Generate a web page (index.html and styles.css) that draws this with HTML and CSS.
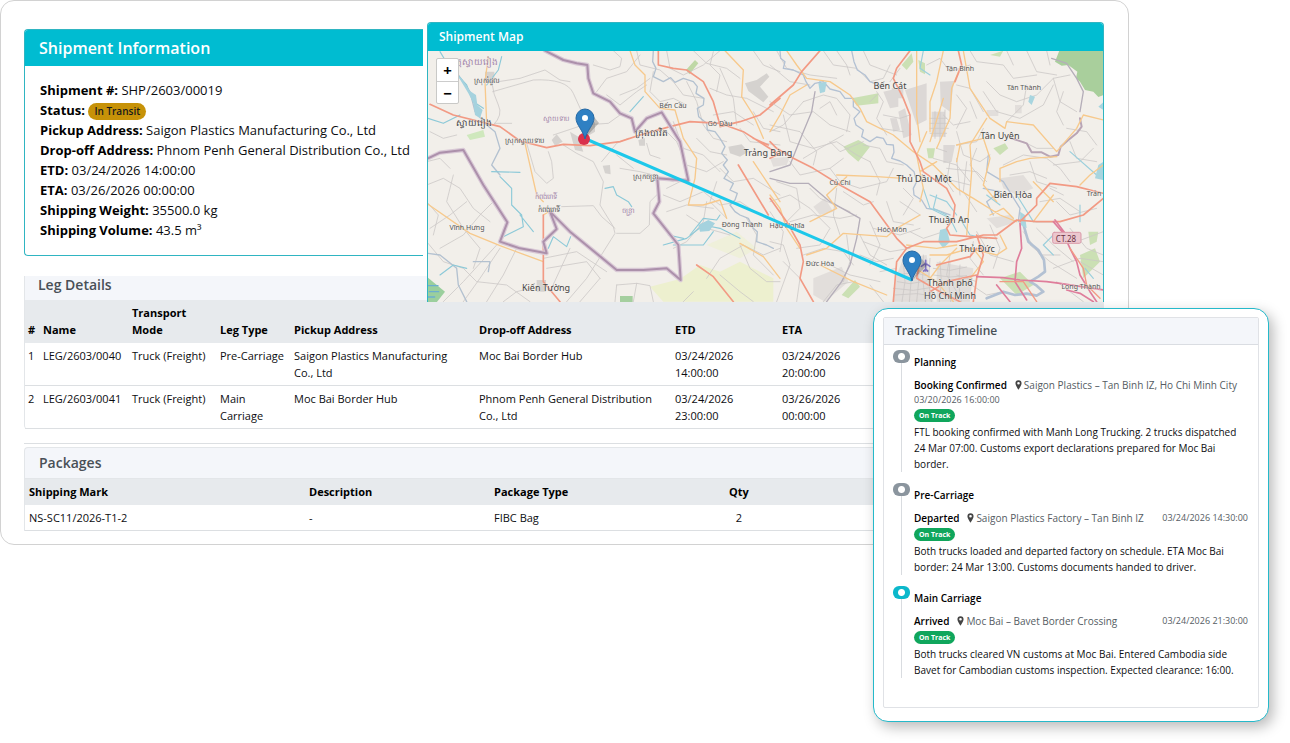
FILE: index.html
```html
<!DOCTYPE html>
<html lang="en">
<head>
<meta charset="utf-8">
<title>Shipment SHP/2603/00019</title>
<link rel="stylesheet" href="styles.css">
</head>
<body>
<main class="page">
  <section class="sheet">
    <div class="overview">
      <div class="overview-side">
        <article class="info">
          <h1 class="info-title">Shipment Information</h1>
          <div class="info-body">
            <p><b>Shipment #:</b> SHP/2603/00019</p>
            <p><b>Status:</b> <span class="status">In Transit</span></p>
            <p><b>Pickup Address:</b> Saigon Plastics Manufacturing Co., Ltd</p>
            <p><b>Drop-off Address:</b> Phnom Penh General Distribution Co., Ltd</p>
            <p><b>ETD:</b> 03/24/2026 14:00:00</p>
            <p><b>ETA:</b> 03/26/2026 00:00:00</p>
            <p><b>Shipping Weight:</b> 35500.0 kg</p>
            <p><b>Shipping Volume:</b> 43.5 m³</p>
          </div>
        </article>
        <h2 class="section-title leg-title">Leg Details</h2>
      </div>
      <article class="map-card">
        <h2 class="map-title">Shipment Map</h2>
        <div class="map">
          <svg class="map-svg" viewBox="0 0 675 251" preserveAspectRatio="xMidYMid slice" role="img" aria-label="Route map">
            <rect width="675" height="251" fill="#f2efea"/>
            <!-- western half -->
            <g transform="translate(-8 -36) scale(.33333)" fill="none" stroke-linejoin="round" stroke-linecap="round">
              <g fill="#edf0cf">
                <path d="M780 792 840 750 900 770 960 740 1060 790 1060 860 730 860 690 815Z"/>
                <path d="M860 690 950 650 1010 700 960 730Z" opacity=".6"/>
              </g>
              <path d="M20 785 75 830 50 862 20 862Z" fill="#9bcf9d"/>
              <path d="M24 812h30M28 830h28M24 846h20" stroke="#6caed0" stroke-width="4"/>
              <path d="M600 843h38v20h-38z" fill="#a5cf9f"/>
              <path d="M798 165 825 135 835 145 808 178Z" fill="#bfd8a6"/>
              <path d="M140 360 190 345 195 365 150 375Z" fill="#cfe8bd"/>
              <g fill="#d5d2cf">
                <path d="M975 205 1010 195 1040 175 1048 185 1020 215 1045 245 1030 262 985 228Z"/>
                <path d="M395 375 410 358 428 380 405 392Z"/><path d="M450 350 475 365 490 410 465 405Z"/>
                <path d="M500 325 525 322 525 350 505 362Z"/><path d="M548 452 570 450 572 478 555 475Z"/>
                <path d="M655 375 675 370 675 392 658 392Z"/><path d="M925 395 965 388 985 410 960 425 930 415Z"/>
                <path d="M195 170h28v32h-28zM350 795h28v35h-28z"/>
              </g>
              <g stroke="#cbc8c6" stroke-width="2.4">
                <path d="M215 200Q220 240 235 270T220 330M218 230 340 195Q440 190 460 235L485 290M235 200 300 190 375 165 420 195 450 200M225 325 275 325"/>
                <path d="M320 385 345 470 380 505 400 490 395 440 385 410M400 360 490 330 565 325 600 300M430 390 470 415 520 440 550 500 540 570 580 635 585 655 500 790 440 860M425 575 520 572 545 605 585 640"/>
                <path d="M590 655 660 655 688 630 690 560 710 540M545 440 570 410 590 385 625 370M600 460 660 470 700 480 760 500M590 420 640 460M680 385 690 420 720 430"/>
                <path d="M20 510 70 490 120 520 160 580 210 620M30 640 90 600 140 560M60 700 130 660 180 600 220 560M100 480 80 560 130 640 180 700 160 760M20 680 70 740 130 760 170 800 260 810 330 860M70 860 130 800 230 690M240 700 180 790 130 860M290 700 250 780 200 860M20 560 55 600 40 660"/>
                <path d="M370 730 470 710 560 770M380 760 500 740 540 790M450 700 390 830M540 790 480 860M590 810 585 860M590 810 650 805 690 812 700 860M640 860 650 805"/>
                <path d="M520 150 570 165 600 155 605 130 580 107M650 107 660 150 720 165 760 200 790 240 850 250M740 107 750 160 790 180 850 150 900 107M820 107 860 145 920 160 960 190M900 160 940 250 950 330M600 240 650 220 690 190M700 170 690 230 720 260 760 250 800 270M870 220 920 240 980 250 1060 290M1000 107 1030 150 1080 170M880 110 870 150 900 180 890 230"/>
                <path d="M800 200 830 260 850 330 880 370 920 380M760 320 790 400 850 420 900 470M740 350 770 380 800 450 860 470 910 440M830 370 870 410 920 420M960 340 990 380 1080 390M1000 290 1030 340 1080 350M880 300 940 290 1000 330"/>
                <path d="M730 540 780 560 850 530 900 570 960 560 1020 600M740 520 800 490M740 590 800 570 880 580M800 600 860 640 930 660M860 560 850 620 800 680 760 700M890 500 870 560 920 610M900 460 940 500 1000 490 1080 540M860 790 900 730 970 690 1030 720 1080 700M820 830 790 860M900 780 960 830 1000 860M960 690 990 760 1040 800 1080 800M980 610 1010 660 1000 720 1060 780"/>
                <path d="M560 240 600 270 650 230 680 210M530 230 560 190 620 170 660 120M250 860 290 830 330 820M20 440 60 430 90 460M30 350 70 370 110 360"/>
              </g>
              <g stroke="#b3c1d0" stroke-width="4">
                <path d="M115 180 150 230 165 290 200 330 225 350 240 400 215 450 240 480"/>
                <path d="M700 107 698 140 708 160 700 185 730 200 752 188 765 202 790 190 820 200 832 215 828 235 852 250 850 270 832 280 836 305 860 325 862 345 885 350 900 370 915 395 905 415 922 435 910 450 925 470 912 490 940 505 930 525 952 535 945 555 930 570 945 590 960 600 985 610 1000 640 1012 650 1010 680 1040 690 1060 700"/>
                <path d="M24 715 60 720 110 760 115 810 140 860M160 740 210 740 205 770"/>
              </g>
              <g stroke="#8cc9d8" stroke-width="3.4">
                <path d="M85 150 140 210 160 260 190 280M245 125 235 165 200 210M60 110 90 160M24 310 70 325 120 300M215 470 300 472M240 485 275 520 275 570 305 600 310 635 250 665M300 600 340 650M385 700 400 665 440 695 452 665M555 520 580 515 590 540 625 560 635 575M730 690 800 670 850 630 900 640 960 670M630 290 670 245M745 660 790 670M60 780 100 750 140 760"/>
                <path d="M810 660 850 610 890 615 900 600M760 690 850 690 880 650"/>
              </g>
              <path d="M112 180 145 235 160 265 165 300 180 310 188 285 172 270 168 240 150 228 125 190ZM835 630 865 615 885 625 868 648 840 650Z" fill="#a5d2de"/>
              <g stroke="#f7c98c" stroke-width="4">
                <path d="M205 125 195 200 200 325M315 385 350 540 370 560M20 565 150 655 240 692 370 740M630 107 645 150 675 180 675 230 720 280 765 285 790 370 830 430 825 490 805 570 850 570 900 555 920 610M915 107 970 165 965 245 1000 300 1030 370M960 685 1030 725 1080 790M1000 440 1040 500 1080 560M370 600 395 585"/>
              </g>
              <g stroke="#f29a84" stroke-width="5">
                <path d="M30 268 100 300 240 335 300 378 380 398 430 388 510 392 600 380 660 360 750 335 810 320 900 325 970 350 1080 420M715 107 715 150 760 160 800 165 850 200 880 260 900 330M955 450 1045 600M830 750 880 785 940 860M370 600 370 800 420 860M1080 250 1020 300 960 320 900 335M1000 370 1045 390"/>
              </g>
              <g stroke="#d9c9d6" stroke-width="13">
                <path d="M24 430 60 413 130 405 190 510 262 622 240 680 300 700 380 715 370 680 410 642 390 590 450 650 590 765 670 765 740 760 782 795 775 690 700 595 718 560 712 490 805 497 780 380 725 292 680 310 645 350 635 310 600 295 570 260 520 235 505 190 502 150 470 145 430 135 375 107"/>
              </g>
              <g stroke="#ac90ab" stroke-width="6">
                <path d="M24 430 60 413 130 405 190 510 262 622 240 680 300 700 380 715 370 680 410 642 390 590 450 650 590 765 670 765 740 760 782 795 775 690 700 595 718 560 712 490 805 497 780 380 725 292 680 310 645 350 635 310 600 295 570 260 520 235 505 190 502 150 470 145 430 135 375 107"/>
              </g>
            </g>
            <!-- eastern half -->
            <g transform="translate(342 -36) scale(.33333)" fill="none" stroke-linejoin="round" stroke-linecap="round">
              <path d="M868 107 1000 107 1000 240 985 246 970 230 945 225 930 200 918 190 922 170 895 150 875 152 855 140Z" fill="#a9cf9c"/>
              <g fill="#cbe0b4">
                <path d="M245 250 325 235 325 265 260 272ZM220 395 265 375 300 395 265 440 235 415ZM395 150 425 115 430 140 410 165ZM445 135 465 145 465 178 450 170ZM215 840 255 795 270 815 235 850ZM470 400 495 400 490 430 475 430ZM660 120 700 107 690 125Z"/>
                <path d="M930 720 975 700 990 740 940 790ZM955 650 985 650 980 680 960 690ZM670 400 705 385 715 400 690 420ZM690 790 750 770 790 810 740 840Z"/>
              </g>
              <g fill="#dcd8d6">
                <path d="M340 230 385 220 385 275 360 280ZM385 290 405 280 425 360 400 370ZM405 225 470 205 470 315 440 330ZM510 200 552 198 540 290 512 270ZM485 290 525 290 525 365 485 365ZM520 390 555 390 545 440 520 445ZM360 310 380 310 390 345 370 350ZM365 220h35v30h-35z"/>
                <path d="M0 430 60 425 50 450 10 455ZM130 575 165 550 190 590 150 600ZM130 790 215 755 235 800 165 860 130 840ZM650 285h35v18h-35zM735 270h20v25h-20zM690 490 760 480 790 520 740 540 700 520ZM400 730 470 720 490 860 370 860 380 780ZM500 740 610 760 600 860 500 860ZM650 610 720 600 740 620 680 640Z" opacity=".75"/>
              </g>
              <g stroke="#cbc8c7" stroke-width="2.4">
                <path d="M0 150 60 200 120 210M20 107 50 160 120 180 200 190M100 260 160 240 200 250 240 300 230 350M0 260 60 300 130 290 180 330 240 350M40 300 60 380 130 400 200 380 260 420 300 440M160 107 190 150 260 160 300 200 340 190 360 150M200 107 230 150 240 180M280 107 300 150 380 180M0 330 90 350 140 410 130 450M100 430 150 400 220 360M60 440 90 480 180 460 220 430M180 460 210 500 270 520 350 500 370 460M0 350 40 330 100 260"/>
                <path d="M0 560 60 540 120 580 180 640 150 690 80 700M0 590 40 650 30 710M60 620 130 600 210 610 260 600M120 520 150 550 240 590M200 520 190 600 210 660M220 530 280 570 310 560M300 440 330 500 320 540M280 390 330 400 350 440 400 450M20 500 80 520 90 580 50 620M0 680 40 690 60 750 20 860M40 740 90 790 80 860M100 720 160 700 220 710 250 750M180 750 240 780 330 800M160 860 200 810 250 800M230 660 240 740 220 800M270 660 300 720 350 750M150 280 180 260 200 300M180 380 210 410 280 380"/>
                <path d="M320 230 340 260 320 310 350 360M300 260 320 240M360 200 390 160M340 300 390 310 420 300M330 340 400 350M470 150 510 130 540 170 600 150M600 107 620 140 700 150 730 190 800 180M650 200 690 240 740 260 800 240 850 190 900 180M640 230 680 290 750 310 820 270 850 210M710 107 730 150M770 107 800 170 860 180M830 107 840 150M850 190 870 260 920 290M710 320 760 270 770 210M560 210 600 220 640 290M560 240 590 280 560 340M520 300 550 330 600 320M600 260 620 310M880 230 860 290 880 330M640 340 620 380 560 390"/>
                <path d="M480 310h50M480 325h55M480 340h55M480 355h50M495 290v80M510 285v90M525 285v80M500 400 530 410M490 430 560 450 600 500M560 350 580 420 630 440 660 420M530 460 620 470 650 500M520 490 600 510M510 470 550 530M540 440 530 500M560 430 570 540M620 400 600 450 640 500M590 440 580 530 620 590M700 450 760 420 830 430 870 460 900 500M780 440 800 500 860 520M760 380 800 400 850 400M900 380 920 430 980 440M720 480 780 470 830 490M860 560 900 600 980 580M810 560 870 550 930 590M840 520 880 540M850 450 930 440 970 400M890 340 950 350 980 390"/>
                <path d="M300 620 330 690 300 750M310 640 390 660 450 640M280 680 360 710 420 700M350 560 370 620 430 630M390 560 450 600M400 520 430 550 400 600M270 720 320 740 370 730M330 770 380 760M300 810 340 860M420 650 460 670 520 650M610 680 600 730 640 780M620 650 660 720 730 740M660 630 690 700 670 760M590 800 650 840 700 830M540 720 530 780 560 830M560 780 620 800M800 640 850 690 910 740M780 690 840 740 920 790M900 640 950 700 1000 720M930 740 1000 780M850 760 930 730 1000 740M860 800 940 860M920 680 1000 650M760 650 810 720 870 720"/>
                <path d="M380 780 430 772 470 782M382 800 420 806 480 796M370 820 430 826 480 818M375 840 440 836 485 842M400 740 405 800 396 860M420 720 424 790 418 860M440 730 446 800 440 860M460 720 458 790 466 860M480 730 476 800 484 860M490 760 540 766 590 756M490 780 540 786 590 782M510 740 514 800 508 860M540 740 536 800 542 860M570 750 566 810 574 860"/>
              </g>
              <g stroke="#b5aeb9" stroke-width="4">
                <path d="M135 230 125 290 100 350 80 400 60 450 0 470M0 490 60 505 115 505 180 560 270 610 260 670 240 750 215 800 170 860M845 130 890 145 920 190 940 230 930 290"/>
              </g>
              <g stroke="#b3c1d3" stroke-width="4">
                <path d="M30 107 32 130 45 140 40 160 70 165 100 180 108 200 120 220 135 205 160 200 180 222 210 230 225 250 250 250 250 275 270 290 252 310 258 330 280 345 275 365 300 380 320 366 340 370 350 388 370 390 372 412 365 430 390 438 410 450 432 470 440 500 430 520 432 540 455 555 470 580 500 585 540 600M245 107 252 140 262 165 285 180 300 200 340 215M655 420 650 470 700 500 750 580 745 620M670 600 650 560 690 530 640 520"/>
                <path d="M755 610 765 645 775 680 805 705 822 735 825 770 805 785 780 800 800 812 820 830 800 842 770 836 735 840 700 830 650 850" stroke-width="8"/>
              </g>
              <g stroke="#9bcfdc" stroke-width="3.5">
                <path d="M460 520 480 580 540 610 560 650M480 540 530 560 560 600M740 540 790 620 850 620M850 660 820 690 850 720M945 760 970 790M460 107 450 160 480 180M500 540 490 580 530 600M570 610 600 660 650 670M930 570 930 620M900 410 980 480M650 540 690 570M150 200 160 230"/>
              </g>
              <path d="M510 645 530 640 540 680 520 700 505 680ZM780 240 795 245 785 270 775 260ZM985 450 1000 440 1000 495 975 490ZM145 205 170 200 165 230 150 235ZM750 590 765 600 770 640 752 630ZM985 275 1000 262 1000 285Z" fill="#a8d5df"/>
              <path d="M725 370 770 385 785 412 815 412 840 425 865 420 872 395 895 375 920 355 935 335 930 310" stroke="#b9a5b5" stroke-width="6"/>
              <g stroke="#f7c98c" stroke-width="4">
                <path d="M50 107 80 150 110 190 180 200 240 240 270 280 290 320 370 360 430 410 490 450 560 520 610 550 690 600 740 620M440 107 440 300 450 380M500 440 450 470 460 520 450 560M480 350 480 260 500 200 520 107M580 107 600 220 660 310 705 340M500 400 540 310 545 220 570 160M470 350 440 420 450 470M705 340 710 320 790 330 860 410 920 340 940 300 1000 315M650 310 600 390 605 470 590 660M690 500 690 460 740 440 780 430 860 425M0 350 30 300 60 240 110 210M200 480 320 485 400 490M120 620 200 580 170 540 230 485M110 720 170 700 220 655 350 665 380 640 450 600M0 540 30 580 50 640 90 700M150 750 250 800 350 840M640 370 660 430 640 510 680 560M560 390 640 370M850 560 790 500M930 510 960 480 1000 450M520 250 480 380M410 690 500 700 560 690M480 720 530 720 600 700 680 720 710 700 690 660M560 700 510 750 480 790M610 700 640 740 600 790M420 750 500 800 550 860M660 600 700 580 730 610M790 620 850 540M560 440 570 390"/>
              </g>
              <g stroke="#f29a84" stroke-width="5">
                <path d="M0 270 70 210 95 170 150 107M0 380 20 400 70 430 130 460 210 510 300 560 380 670 410 700M420 107 380 160 370 190 400 250 420 300 420 380 450 440 460 470 530 520 555 570 550 610 530 640 540 660 600 665 680 670M565 107 575 150 555 200M1000 550 940 600 870 620 800 620 740 615 680 660 640 660 560 680 460 680 410 700 380 740 370 860M750 620 800 570 800 550 840 505 920 515 1000 535M0 550 50 620 90 690 100 740 90 790 130 860M610 860 620 790 640 720 620 660M500 750 600 725 620 700M480 830 530 800 620 780M450 740 440 790 510 830 570 860M0 430 20 420"/>
              </g>
              <g stroke="#df7d9b" stroke-width="5">
                <path d="M620 785 700 788 750 795 830 800 870 805 1000 825M750 625 755 700 740 740 735 800 770 855M850 620 880 655 900 700 920 740 930 780 960 830 980 860M855 615 905 680M890 825 930 835 970 860M680 810 720 860"/>
              </g>
              <path d="M690 800 760 800 800 860M900 700 940 760 950 810 990 850" stroke="#f29a84" stroke-width="4"/>
              <rect x="848" y="652" width="85" height="33" rx="5" fill="#ecc7cf" stroke="#d99aa9" stroke-width="3"/>
              <path d="M467 736v32M454 754 467 745 480 754M461 768 467 763 473 768" stroke="#8174c2" stroke-width="5"/>
            </g>
            <g class="map-label map-label-big">
              <text x="340" y="105">Trảng Bàng</text><text x="462" y="38">Bến Cát</text><text x="572" y="88">Tân Uyên</text>
              <text x="496" y="131">Thủ Dầu Một</text><text x="585" y="147">Biên Hòa</text><text x="521" y="172">Thuận An</text>
              <text x="549" y="201">Thủ Đức</text><text x="522" y="235">Thành phố</text><text x="522" y="248">Hồ Chí Minh</text>
              <text x="118" y="240">Kiến Tường</text><text x="46" y="75">ស្វាយរៀង</text><text x="223" y="85">ក្រុងបាវិត</text>
            </g>
            <g class="map-label">
              <text x="245" y="57">Bến Cầu</text><text x="292" y="75">Gò Dầu</text><text x="39" y="179">Vĩnh Hưng</text>
              <text x="314" y="176">Đông Thành</text><text x="359" y="177">Hậu Nghĩa</text><text x="532" y="20">Tân Bình</text>
              <text x="596" y="39">Tân Thành</text><text x="412" y="134">Củ Chi</text><text x="464" y="181">Hóc Môn</text>
              <text x="392" y="215">Đức Hòa</text><text x="653" y="238">Long Thành</text><text x="666" y="145">Trản</text>
              <text class="map-shield" x="638" y="191">CT.28</text><text x="59" y="32">ស្រុករំដួល</text><text x="96" y="92">ស្រុកស្វាយទាប</text>
              <text x="217" y="128">ស្រុកចន្រ្ទា</text><text x="121" y="161">កំពង់រោទិ៍</text>
            </g>
            <g class="map-label map-label-soft">
              <text class="map-label-big" x="49" y="14">ត្តស្វាយរៀង</text><text x="128" y="70">ស្វាយទាប</text><text x="118" y="148">កំពង់រោទិ៍</text><text x="200" y="162">ចន្រ្ទា</text>
            </g>
            <path d="M158 88 484 229" stroke="#1dc8ea" stroke-width="3" fill="none"/>
            <circle cx="156" cy="88" r="6" fill="#d9304c"/>
            <path d="M157 87 171 72 166 66Z" fill="#000" opacity=".2"/>
            <path d="M485 229 499 214 494 208Z" fill="#000" opacity=".2"/>
            <g fill="#2f80c3" stroke="#2468a4" stroke-width="1">
              <path d="M157 88C155 79 148 74 148 67a9 9 0 0 1 18 0C166 74 159 79 157 88Z"/>
              <path d="M484 230C482 221 475 216 475 209a9 9 0 0 1 18 0C493 216 486 221 484 230Z"/>
            </g>
            <circle cx="157" cy="67" r="3" fill="#fff"/><circle cx="484" cy="209" r="3" fill="#fff"/>
          </svg>
          <div class="zoom-control">
            <button type="button" aria-label="Zoom in">+</button>
            <button type="button" aria-label="Zoom out">−</button>
          </div>
        </div>
      </article>
    </div>

    <table class="grid-table legs">
      <colgroup><col class="c-no"><col class="c-name"><col class="c-mode"><col class="c-type"><col class="c-from"><col class="c-to"><col class="c-etd"><col></colgroup>
      <thead><tr><th>#</th><th>Name</th><th>Transport<br>Mode</th><th>Leg Type</th><th>Pickup Address</th><th>Drop-off Address</th><th>ETD</th><th>ETA</th></tr></thead>
      <tbody>
        <tr><td>1</td><td>LEG/2603/0040</td><td>Truck (Freight)</td><td class="leg-type">Pre-Carriage</td><td class="address">Saigon Plastics Manufacturing Co., Ltd</td><td class="address">Moc Bai Border Hub</td><td>03/24/2026<br>14:00:00</td><td>03/24/2026<br>20:00:00</td></tr>
        <tr><td>2</td><td>LEG/2603/0041</td><td>Truck (Freight)</td><td class="leg-type">Main<br>Carriage</td><td class="address">Moc Bai Border Hub</td><td class="address">Phnom Penh General Distribution Co., Ltd</td><td>03/24/2026<br>23:00:00</td><td>03/26/2026<br>00:00:00</td></tr>
      </tbody>
    </table>

    <section class="packages">
      <h2 class="section-title packages-title">Packages</h2>
      <table class="grid-table">
        <colgroup><col class="p-mark"><col class="p-desc"><col class="p-type"><col class="p-qty"><col></colgroup>
        <thead><tr><th>Shipping Mark</th><th>Description</th><th>Package Type</th><th class="center">Qty</th><th></th></tr></thead>
        <tbody><tr><td>NS-SC11/2026-T1-2</td><td>-</td><td>FIBC Bag</td><td class="center">2</td><td></td></tr></tbody>
      </table>
    </section>
  </section>

  <aside class="tracker">
    <div class="tracker-card">
      <h2 class="tracker-title">Tracking Timeline</h2>
      <ol class="stages">
        <li class="stage">
          <h3>Planning</h3>
          <div class="event-head">
            <span class="event"><b>Booking Confirmed</b><span class="place"><svg class="pin" viewBox="0 0 8 11"><path d="M4 0a3.5 3.5 0 0 0-3.5 3.5C.5 6 4 11 4 11S7.500 6 7.500 3.500A3.500 3.500 0 0 0 4 0Zm0 2a1.500 1.500 0 1 1 0 3 1.500 1.500 0 0 1 0-3Z" fill-rule="evenodd"/></svg>Saigon Plastics – Tan Binh IZ, Ho Chi Minh City</span></span>
            <time>03/20/2026 16:00:00</time>
          </div>
          <span class="track">On Track</span>
          <p>FTL booking confirmed with Manh Long Trucking. 2 trucks dispatched 24 Mar 07:00. Customs export declarations prepared for Moc Bai border.</p>
        </li>
        <li class="stage">
          <h3>Pre-Carriage</h3>
          <div class="event-head">
            <span class="event"><b>Departed</b><span class="place"><svg class="pin" viewBox="0 0 8 11"><path d="M4 0a3.5 3.5 0 0 0-3.5 3.5C.5 6 4 11 4 11S7.500 6 7.500 3.500A3.500 3.500 0 0 0 4 0Zm0 2a1.500 1.500 0 1 1 0 3 1.500 1.500 0 0 1 0-3Z" fill-rule="evenodd"/></svg>Saigon Plastics Factory – Tan Binh IZ</span></span>
            <time>03/24/2026 14:30:00</time>
          </div>
          <span class="track">On Track</span>
          <p>Both trucks loaded and departed factory on schedule. ETA Moc Bai border: 24 Mar 13:00. Customs documents handed to driver.</p>
        </li>
        <li class="stage current">
          <h3>Main Carriage</h3>
          <div class="event-head">
            <span class="event"><b>Arrived</b><span class="place"><svg class="pin" viewBox="0 0 8 11"><path d="M4 0a3.5 3.5 0 0 0-3.5 3.5C.5 6 4 11 4 11S7.500 6 7.500 3.500A3.500 3.500 0 0 0 4 0Zm0 2a1.500 1.500 0 1 1 0 3 1.500 1.500 0 0 1 0-3Z" fill-rule="evenodd"/></svg>Moc Bai – Bavet Border Crossing</span></span>
            <time>03/24/2026 21:30:00</time>
          </div>
          <span class="track">On Track</span>
          <p>Both trucks cleared VN customs at Moc Bai. Entered Cambodia side Bavet for Cambodian customs inspection. Expected clearance: 16:00.</p>
        </li>
      </ol>
    </div>
  </aside>
</main>
</body>
</html>
```
FILE: styles.css
```css
* { box-sizing: border-box; }

body {
  margin: 0;
  background: #fff;
  color: #0c0d10;
  font-family: "Open Sans", "Noto Sans", sans-serif;
  font-size: 11px;
  line-height: 17px;
}

h1, h2, h3, p, ol { margin: 0; padding: 0; }
b, h3 { font-weight: 600; color: #000; }

.page { position: relative; padding-bottom: 198px; }

.sheet {
  width: calc(100% - 161px);
  padding: 21px 24px 13px 23px;
  border: 1px solid #d2d2d2;
  border-radius: 14px;
}

.overview {
  display: grid;
  grid-template-columns: 399fr 677fr;
  gap: 4px;
}

.overview-side {
  display: flex;
  flex-direction: column;
  justify-content: space-between;
  min-width: 0;
  padding-top: 7px;
}

.info {
  border: 1px solid #2fb5c2;
  border-right: 0;
  border-radius: 4px 0 0 4px;
  overflow: hidden;
}

.info-title {
  padding: 8px 14px;
  background: #00bcd1;
  color: #fff;
  font-size: 16px;
  font-weight: 600;
  line-height: 20px;
}

.info-body {
  padding: 14px 0 15px 15px;
  font-size: 13px;
  line-height: 20px;
  white-space: nowrap;
}
.info-body b { font-weight: 700; }

.status {
  display: inline-block;
  padding: 0 6px;
  border-radius: 9px;
  background: #c79208;
  color: #16181c;
  font-size: 10px;
  font-weight: 600;
  line-height: 17px;
}

.section-title {
  background: #f4f6fa;
  color: #495057;
  font-size: 14px;
  font-weight: 600;
}

.leg-title {
  margin-right: -4px;
  padding: 0 13px 7px;
  line-height: 17px;
  border-left: 1px solid #e3e6e9;
}

.map-card {
  position: relative;
  overflow: hidden;
  min-width: 0;
  margin-bottom: -2px;
  border: 1px solid #2fb5c2;
  border-bottom: 0;
  border-radius: 4px 4px 0 0;
}

.map-title {
  padding: 4px 11px;
  background: #00bcd1;
  color: #fff;
  font-size: 12px;
  font-weight: 600;
  line-height: 20px;
}

.map { position: relative; height: 251px; }
.map-svg { display: block; width: 100%; height: 100%; }

.map-label {
  fill: #555;
  stroke: #f6f3ef;
  stroke-opacity: .6;
  stroke-width: 1px;
  paint-order: stroke;
  font-family: "Noto Sans", sans-serif;
  font-size: 7px;
  text-anchor: middle;
}
.map-label-big { fill: #444; font-size: 9px; }
.map-label-soft, .map-label-soft .map-label-big { fill: #a183a8; }
.map-shield { fill: #6b3444; font-size: 8px; stroke: none; }

.zoom-control {
  position: absolute;
  top: 7px;
  left: 8px;
  display: grid;
  width: 23px;
  border: 1px solid #c9c9c7;
  border-radius: 2px;
  background: #fff;
}
.zoom-control button {
  height: 22px;
  padding: 0;
  border: 0;
  background: none;
  color: #000;
  font-family: "Noto Sans", sans-serif;
  font-size: 15px;
  font-weight: 700;
  line-height: 20px;
}
.zoom-control button + button { border-top: 1px solid #ccc; }

.grid-table {
  width: 100%;
  border-collapse: separate;
  border-spacing: 0;
  table-layout: fixed;
}
.grid-table th, .grid-table td {
  padding: 4px;
  border-bottom: 1px solid #dcdfe2;
  text-align: left;
  vertical-align: top;
}
.grid-table th {
  background: #e7eaed;
  border-bottom-color: #e7eaed;
  color: #000;
  font-weight: 700;
  vertical-align: bottom;
}
.grid-table .center { text-align: center; }
.grid-table .leg-type { padding-right: 0; }
.grid-table .address { padding-right: 12px; }

.legs {
  border-left: 1px solid #e3e6e9;
  border-radius: 0 0 4px 4px;
}
.legs th:first-child, .legs td:first-child { padding-left: 3px; padding-right: 0; }

.c-no { width: 14px; }
.c-name { width: 89px; }
.c-mode { width: 88px; }
.c-type { width: 74px; }
.c-from { width: 185px; }
.c-to { width: 196px; }
.c-etd { width: 107px; }

.packages {
  margin-top: 14px;
  padding-top: 3px;
  border-top: 1px solid #dcdfe2;
}
.packages .grid-table { border-left: 1px solid #e3e6e9; }
.packages-title {
  padding: 5px 14px;
  border: 1px solid #e3e6e9;
  border-right: 0;
  border-radius: 4px 0 0 0;
  line-height: 20px;
}

.p-mark { width: 280px; }
.p-desc { width: 185px; }
.p-type { width: 150px; }
.p-qty { width: 198px; }

.tracker {
  position: absolute;
  top: 308px;
  right: 21px;
  width: 396px;
  padding: 8px 9px 13px;
  border: 1px solid #25b9ca;
  border-radius: 15px;
  background: #fff;
  box-shadow: 4px 5px 14px rgba(0, 0, 0, .28);
}

.tracker-card {
  border: 1px solid #e0e2e6;
  border-radius: 2px;
  padding-bottom: 29px;
}

.tracker-title {
  padding: 3px 11px;
  border-bottom: 1px solid #dadde2;
  background: #f4f6fa;
  color: #495057;
  font-size: 12px;
  font-weight: 600;
  line-height: 20px;
}

.stages {
  display: grid;
  gap: 15px;
  padding: 9px 10px 0 17px;
  list-style: none;
}

.stage {
  position: relative;
  padding-left: 12px;
  border-left: 1px solid #d9dce0;
  font-size: 10px;
  line-height: 16px;
}

.stage::before {
  content: "";
  position: absolute;
  top: -4px;
  left: -9px;
  width: 17px;
  height: 13px;
  border-radius: 6px;
  background: radial-gradient(circle, #fff 3px, #8b959e 4px);
}
.stage.current::before { background: radial-gradient(circle, #fff 3px, #0cb8cb 4px); }

.stage h3 { margin-bottom: 7px; font-size: 10px; }

.event-head {
  display: flex;
  flex-wrap: wrap;
  align-items: center;
  justify-content: space-between;
  margin-bottom: 2px;
  color: #555c63;
}
.event, .place { white-space: nowrap; }
.place { margin-left: 8px; }
.pin {
  width: 7px;
  height: 10px;
  margin-right: 2px;
  fill: #444;
  vertical-align: -1px;
}

.event-head time { font-size: 9px; line-height: 14px; }

.track {
  display: block;
  width: fit-content;
  margin-bottom: 2px;
  padding: 0 5px;
  border-radius: 7px;
  background: #10a65c;
  color: #fff;
  font-size: 7px;
  font-weight: 700;
  line-height: 13px;
}
```
